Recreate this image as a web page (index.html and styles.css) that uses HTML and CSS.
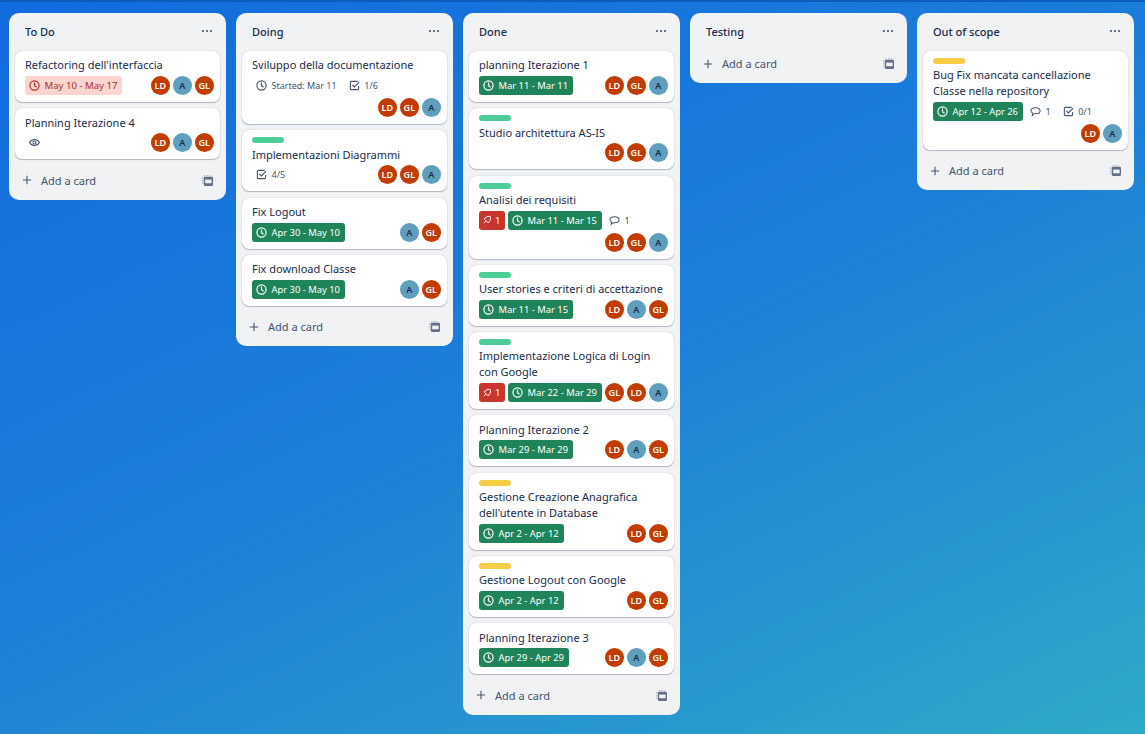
FILE: index.html
```html
<!DOCTYPE html>
<html lang="en">
<head>
    <meta charset="UTF-8">
    <title>Board</title>
    <link rel="stylesheet" href="styles.css">
</head>
<body>
    <svg class="sprites" width="0" height="0">
        <symbol id="i-clock" viewBox="0 0 12 12"><circle cx="6" cy="6" r="5" fill="none" stroke="currentColor" stroke-width="1.300"/><path d="M6 2.800v3.500l2.300 1.500" fill="none" stroke="currentColor" stroke-width="1.300"/></symbol>
        <symbol id="i-check" viewBox="0 0 12 12"><path d="M10.500 6.500v3a1 1 0 0 1-1 1h-7a1 1 0 0 1-1-1v-7a1 1 0 0 1 1-1h7" fill="none" stroke="currentColor" stroke-width="1.200"/><path d="M3.600 5.400 5.800 7.600 11 2.400" fill="none" stroke="currentColor" stroke-width="1.300"/></symbol>
        <symbol id="i-comment" viewBox="0 0 12 12"><path d="M1 5.200C1 3.200 2.800 1.800 6 1.800s5 1.400 5 3.400-1.800 3.300-5 3.300c-.5 0-1 0-1.400-.1L2.500 10.200l.4-2.400C1.700 7.200 1 6.300 1 5.200Z" fill="none" stroke="currentColor" stroke-width="1.100"/></symbol>
        <symbol id="i-eye" viewBox="0 0 12 12"><path d="M.6 6C1.800 3.800 3.700 2.700 6 2.700s4.200 1.100 5.400 3.300C10.200 8.200 8.300 9.300 6 9.300S1.800 8.200.6 6Z" fill="none" stroke="currentColor" stroke-width="1.100"/><circle cx="6" cy="6" r="1.700" fill="none" stroke="currentColor" stroke-width="1.100"/></symbol>
        <symbol id="i-pin" viewBox="0 0 12 12"><path d="M9.800 1.700c.5.500.5 1 .4 1.700L9.700 6.500 7.400 9.500 2.500 4.600 5.500 2.300l3.100-.7c.5-.1.900-.1 1.200.1ZM4.700 7.300 2.200 9.800" fill="none" stroke="currentColor" stroke-width="1.200" stroke-linejoin="round"/></symbol>
        <symbol id="i-plus" viewBox="0 0 12 12"><path d="M6 1v10M1 6h10" stroke="currentColor" stroke-width="1.300"/></symbol>
        <symbol id="i-template" viewBox="0 0 12 12"><path d="M2.500 .8h1.500M5.500 .8h1.500M8.500 .8h1M.8 2.500v1.500M.8 5.500v1.500M.8 8.500v1" stroke="currentColor" stroke-width="1.200" opacity=".6"/><rect x="2" y="2" width="10" height="10" rx="1.500" fill="currentColor"/><rect x="3.500" y="5" width="7" height="4" fill="#f1f2f4"/></symbol>
        <symbol id="i-dots" viewBox="0 0 12 4"><circle cx="2" cy="2" r="1.100" fill="currentColor"/><circle cx="6" cy="2" r="1.100" fill="currentColor"/><circle cx="10" cy="2" r="1.100" fill="currentColor"/></symbol>
    </svg>

    <div class="topbar"></div>
    <div class="board">

        <section class="list">
            <header class="list-head"><h2>To Do</h2><svg class="dots"><use href="#i-dots"/></svg></header>
            <div class="cards">
                <article class="card">
                    <p class="title">Refactoring dell'interfaccia</p>
                    <div class="meta">
                        <span class="badge overdue"><svg class="ico"><use href="#i-clock"/></svg>May 10 - May 17</span>
                        <div class="members"><i class="av ld">LD</i><i class="av a">A</i><i class="av gl">GL</i></div>
                    </div>
                </article>
                <article class="card">
                    <p class="title">Planning Iterazione 4</p>
                    <div class="meta">
                        <span class="badge"><svg class="ico"><use href="#i-eye"/></svg></span>
                        <div class="members"><i class="av ld">LD</i><i class="av a">A</i><i class="av gl">GL</i></div>
                    </div>
                </article>
            </div>
            <footer class="add"><svg class="plus"><use href="#i-plus"/></svg><span>Add a card</span><svg class="tpl"><use href="#i-template"/></svg></footer>
        </section>

        <section class="list">
            <header class="list-head"><h2>Doing</h2><svg class="dots"><use href="#i-dots"/></svg></header>
            <div class="cards">
                <article class="card">
                    <p class="title">Sviluppo della documentazione</p>
                    <div class="meta">
                        <span class="badge"><svg class="ico"><use href="#i-clock"/></svg>Started: Mar 11</span>
                        <span class="badge"><svg class="ico"><use href="#i-check"/></svg>1/6</span>
                        <div class="members"><i class="av ld">LD</i><i class="av gl">GL</i><i class="av a">A</i></div>
                    </div>
                </article>
                <article class="card">
                    <div class="label green"></div>
                    <p class="title">Implementazioni Diagrammi</p>
                    <div class="meta">
                        <span class="badge"><svg class="ico"><use href="#i-check"/></svg>4/5</span>
                        <div class="members"><i class="av ld">LD</i><i class="av gl">GL</i><i class="av a">A</i></div>
                    </div>
                </article>
                <article class="card">
                    <p class="title">Fix Logout</p>
                    <div class="meta">
                        <span class="badge done"><svg class="ico"><use href="#i-clock"/></svg>Apr 30 - May 10</span>
                        <div class="members"><i class="av a">A</i><i class="av gl">GL</i></div>
                    </div>
                </article>
                <article class="card">
                    <p class="title">Fix download Classe</p>
                    <div class="meta">
                        <span class="badge done"><svg class="ico"><use href="#i-clock"/></svg>Apr 30 - May 10</span>
                        <div class="members"><i class="av a">A</i><i class="av gl">GL</i></div>
                    </div>
                </article>
            </div>
            <footer class="add"><svg class="plus"><use href="#i-plus"/></svg><span>Add a card</span><svg class="tpl"><use href="#i-template"/></svg></footer>
        </section>

        <section class="list">
            <header class="list-head"><h2>Done</h2><svg class="dots"><use href="#i-dots"/></svg></header>
            <div class="cards">
                <article class="card">
                    <p class="title">planning Iterazione 1</p>
                    <div class="meta">
                        <span class="badge done"><svg class="ico"><use href="#i-clock"/></svg>Mar 11 - Mar 11</span>
                        <div class="members"><i class="av ld">LD</i><i class="av gl">GL</i><i class="av a">A</i></div>
                    </div>
                </article>
                <article class="card">
                    <div class="label green"></div>
                    <p class="title">Studio architettura AS-IS</p>
                    <div class="meta">
                        <div class="members"><i class="av ld">LD</i><i class="av gl">GL</i><i class="av a">A</i></div>
                    </div>
                </article>
                <article class="card">
                    <div class="label green"></div>
                    <p class="title">Analisi dei requisiti</p>
                    <div class="meta">
                        <span class="badge urgent"><svg class="ico"><use href="#i-pin"/></svg>1</span>
                        <span class="badge done"><svg class="ico"><use href="#i-clock"/></svg>Mar 11 - Mar 15</span>
                        <span class="badge"><svg class="ico"><use href="#i-comment"/></svg>1</span>
                        <div class="members"><i class="av ld">LD</i><i class="av gl">GL</i><i class="av a">A</i></div>
                    </div>
                </article>
                <article class="card">
                    <div class="label green"></div>
                    <p class="title">User stories e criteri di accettazione</p>
                    <div class="meta">
                        <span class="badge done"><svg class="ico"><use href="#i-clock"/></svg>Mar 11 - Mar 15</span>
                        <div class="members"><i class="av ld">LD</i><i class="av a">A</i><i class="av gl">GL</i></div>
                    </div>
                </article>
                <article class="card">
                    <div class="label green"></div>
                    <p class="title">Implementazione Logica di Login con Google</p>
                    <div class="meta">
                        <span class="badge urgent"><svg class="ico"><use href="#i-pin"/></svg>1</span>
                        <span class="badge done"><svg class="ico"><use href="#i-clock"/></svg>Mar 22 - Mar 29</span>
                        <div class="members"><i class="av gl">GL</i><i class="av ld">LD</i><i class="av a">A</i></div>
                    </div>
                </article>
                <article class="card">
                    <p class="title">Planning Iterazione 2</p>
                    <div class="meta">
                        <span class="badge done"><svg class="ico"><use href="#i-clock"/></svg>Mar 29 - Mar 29</span>
                        <div class="members"><i class="av ld">LD</i><i class="av a">A</i><i class="av gl">GL</i></div>
                    </div>
                </article>
                <article class="card">
                    <div class="label yellow"></div>
                    <p class="title">Gestione Creazione Anagrafica dell'utente in Database</p>
                    <div class="meta">
                        <span class="badge done"><svg class="ico"><use href="#i-clock"/></svg>Apr 2 - Apr 12</span>
                        <div class="members"><i class="av ld">LD</i><i class="av gl">GL</i></div>
                    </div>
                </article>
                <article class="card">
                    <div class="label yellow"></div>
                    <p class="title">Gestione Logout con Google</p>
                    <div class="meta">
                        <span class="badge done"><svg class="ico"><use href="#i-clock"/></svg>Apr 2 - Apr 12</span>
                        <div class="members"><i class="av ld">LD</i><i class="av gl">GL</i></div>
                    </div>
                </article>
                <article class="card">
                    <p class="title">Planning Iterazione 3</p>
                    <div class="meta">
                        <span class="badge done"><svg class="ico"><use href="#i-clock"/></svg>Apr 29 - Apr 29</span>
                        <div class="members"><i class="av ld">LD</i><i class="av a">A</i><i class="av gl">GL</i></div>
                    </div>
                </article>
            </div>
            <footer class="add"><svg class="plus"><use href="#i-plus"/></svg><span>Add a card</span><svg class="tpl"><use href="#i-template"/></svg></footer>
        </section>

        <section class="list">
            <header class="list-head"><h2>Testing</h2><svg class="dots"><use href="#i-dots"/></svg></header>
            <footer class="add"><svg class="plus"><use href="#i-plus"/></svg><span>Add a card</span><svg class="tpl"><use href="#i-template"/></svg></footer>
        </section>

        <section class="list">
            <header class="list-head"><h2>Out of scope</h2><svg class="dots"><use href="#i-dots"/></svg></header>
            <div class="cards">
                <article class="card">
                    <div class="label yellow"></div>
                    <p class="title">Bug Fix mancata cancellazione Classe nella repository</p>
                    <div class="meta">
                        <span class="badge done"><svg class="ico"><use href="#i-clock"/></svg>Apr 12 - Apr 26</span>
                        <span class="badge"><svg class="ico"><use href="#i-comment"/></svg>1</span>
                        <span class="badge"><svg class="ico"><use href="#i-check"/></svg>0/1</span>
                        <div class="members"><i class="av ld">LD</i><i class="av a">A</i></div>
                    </div>
                </article>
            </div>
            <footer class="add"><svg class="plus"><use href="#i-plus"/></svg><span>Add a card</span><svg class="tpl"><use href="#i-template"/></svg></footer>
        </section>

    </div>
</body>
</html>
```

FILE: styles.css
```css
* {
    box-sizing: border-box;
}
html, body {
    height: 100%;
}
body {
    margin: 0;
    overflow: hidden;
    font-family: "Noto Sans", "Open Sans", sans-serif;
    color: #172b4d;
    background: linear-gradient(155deg, #126bdf 0%, #1c80d8 50%, #2fa8c8 100%);
}
.sprites {
    display: block;
    height: 0;
}
.topbar {
    height: 2px;
    background: #0c5cbc;
}
.board {
    display: flex;
    align-items: flex-start;
    gap: 10px;
    padding: 11px 9px 0;
}
.list {
    flex: 0 0 217px;
    background: #f1f2f4;
    border-radius: 10px;
    padding-bottom: 6px;
}
.list-head {
    display: flex;
    align-items: center;
    justify-content: space-between;
    height: 38px;
    padding: 0 13px 2px 16px;
}
.list-head h2 {
    margin: 0;
    font-size: 11px;
    font-weight: 500;
}
.dots {
    width: 12px;
    height: 4px;
    color: #44546f;
}
.cards {
    padding: 0 6px;
}
.card {
    background: #fff;
    border-radius: 7px;
    padding: 6.400px 6px 7px 10px;
    margin-bottom: 6.300px;
    box-shadow: 0 1px 1px #091e4240, 0 0 1px #091e424f;
}
.card:last-child {
    margin-bottom: 8.400px;
}
.label {
    width: 32px;
    height: 6px;
    border-radius: 3px;
    margin: .6px 0 3.400px;
}
.label.green {
    background: #4bce97;
}
.label.yellow {
    background: #f5cd47;
}
.title {
    margin: 0 0 2.600px;
    font-size: 11px;
    line-height: 16px;
}
.meta {
    display: flex;
    flex-wrap: wrap;
    align-items: center;
    gap: 3px 2px;
}
.badge {
    display: inline-flex;
    align-items: center;
    gap: 4.500px;
    height: 19px;
    padding: 0 5px 0 4px;
    border-radius: 3px;
    font-size: 9px;
    color: #44546f;
}
.badge + .badge {
    margin-left: 1px;
}
.badge.overdue {
    background: #ffd5d2;
    color: #ae2e24;
    font-size: 9.600px;
}
.badge.done {
    background: #1f845a;
    color: #fff;
    font-size: 9.400px;
}
.badge.urgent {
    gap: 3px;
    padding: 0 4.500px 0 3px;
    background: #c9372c;
    color: #fff;
    font-size: 9.500px;
}
.ico {
    width: 11px;
    height: 11px;
}
.urgent .ico {
    width: 10px;
    height: 10px;
}
.members {
    display: flex;
    gap: 2.600px;
    margin-left: auto;
}
.av {
    display: flex;
    align-items: center;
    justify-content: center;
    width: 19.400px;
    height: 19px;
    border-radius: 50%;
    font-style: normal;
    font-size: 9px;
    font-weight: 600;
    color: #fff;
}
.av.ld, .av.gl {
    background: #c23c00;
}
.av.a {
    background: #5f9fbd;
    color: #172b4d;
}
.add {
    display: flex;
    align-items: center;
    height: 26px;
    padding: 0 13px 1px 13px;
    font-size: 11px;
    color: #44546f;
}
.plus {
    width: 10px;
    height: 10px;
    margin-right: 9px;
}
.add span {
    flex: 1;
}
.tpl {
    width: 11px;
    height: 11px;
    color: #626f86;
}
```
